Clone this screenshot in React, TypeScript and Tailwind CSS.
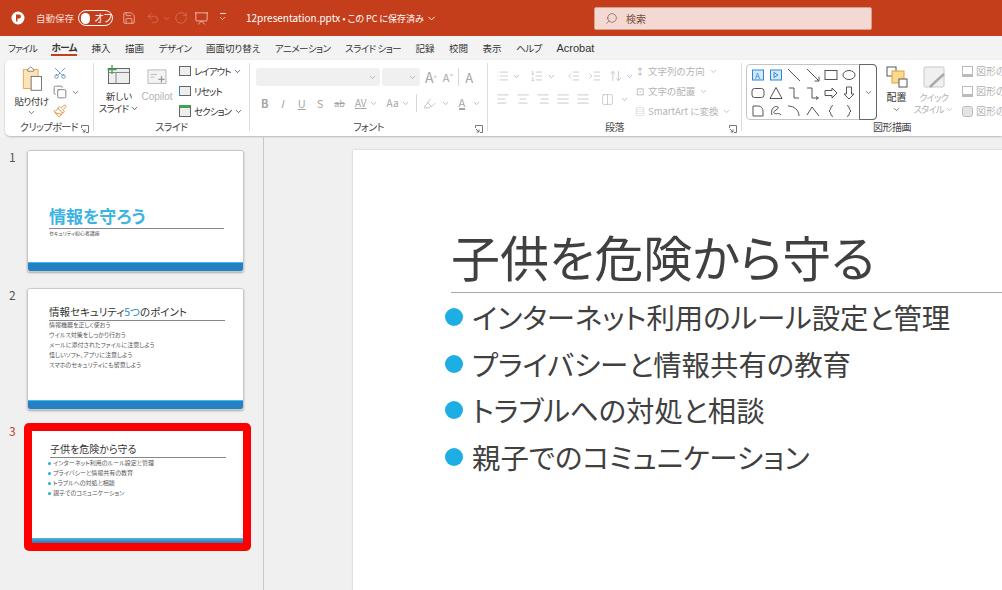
import type { ReactNode } from 'react'
import { ChevronDown, Search, Save, Undo2, RotateCw, Presentation, Scissors, Copy, Paintbrush, List, ListOrdered, IndentDecrease, IndentIncrease, AlignLeft, AlignCenter, AlignRight, AlignJustify, ArrowUpDown, Columns2, Highlighter } from 'lucide-react'

const FONT = '[font-family:"Noto_Sans_CJK_JP","Liberation_Sans",sans-serif] [font-feature-settings:"palt"]'

const items = ['インターネット利用のルール設定と管理', 'プライバシーと情報共有の教育', 'トラブルへの対処と相談', '親子でのコミュニケーション']

function Chev({ className = '' }: { className?: string }) {
  return <ChevronDown size={9} strokeWidth={2} className={`shrink-0 ${className}`} />
}

function Group({ label, width, launcher, children }: { label: string; width: string; launcher?: boolean; children: ReactNode }) {
  return (
    <div className={`${width} relative flex flex-col shrink-0`}>
      <div className="flex-1 flex min-h-0 whitespace-nowrap">{children}</div>
      <div className="h-[14px] mb-[2px] text-center text-[10px] leading-[14px] tracking-[-0.5px] text-[#444]">{label}</div>
      {launcher && (
        <svg viewBox="0 0 8 8" className="absolute right-[4px] bottom-[3px] w-2 h-2 text-[#777]" fill="none" stroke="currentColor">
          <path d="M.5 3V.5H7.500V7.500H5M1 4l3 3M4 4.500V7H1.500" />
        </svg>
      )}
    </div>
  )
}

function Sep() {
  return <div className="w-px shrink-0 bg-[#dcdcdc] mb-[5px]" />
}

function Shape({ d }: { d: ReactNode }) {
  return (
    <svg viewBox="0 0 14 14" className="w-[14px] h-[14px] text-[#555]" fill="none" stroke="currentColor" strokeWidth="1">
      {d}
    </svg>
  )
}

const shapes: ReactNode[] = [
  <g key="a"><rect x="1.500" y="2" width="11" height="10" stroke="#2b88d8" fill="#d6e8f7" /><text x="4" y="10.500" fontSize="8" fill="#2b88d8" stroke="none">A</text></g>,
  <g key="b"><rect x="1.500" y="2" width="11" height="10" stroke="#2b88d8" fill="#d6e8f7" /><path d="M5 4.500 9 7 5 9.500z" stroke="#2b88d8" /></g>,
  <path key="c" d="M1 1 13 13" />,
  <path key="d" d="M1 1 13 13M13 8.500V13H8.500" />,
  <rect key="e" x="1" y="2.500" width="12" height="9" />,
  <ellipse key="f" cx="7" cy="7" rx="6" ry="4.500" />,
  <rect key="g" x="1" y="2.500" width="12" height="9" rx="2.500" />,
  <path key="h" d="M7 1.500 13 12.500H1z" />,
  <path key="i" d="M2 2H7V12H12" />,
  <path key="j" d="M1 2H6V12H11M10 10.500 12.500 12 10 13.500" />,
  <path key="k" d="M1 4.500H8V2L13 7 8 12V9.500H1z" />,
  <path key="l" d="M4.500 1V8H2L7 13 12 8H9.500V1z" />,
  <path key="m" d="M2 2H7C10 2 12 4 12 8V12H2z" />,
  <path key="n" d="M3 11C1 5 6 1 9 3 11 5 3 7 5 9 7 11 10 8 12 11" />,
  <path key="o" d="M1 2C7 2 12 6 12 12" />,
  <path key="p" d="M1 11 6 3 13 12" />,
  <path key="q" d="M9 1.500C6 1.500 7.500 6 5 7 7.500 8 6 12.500 9 12.500" />,
  <path key="r" d="M5 1.500C8 1.500 6.500 6 9 7 6.500 8 8 12.500 5 12.500" />,
]

function Ribbon() {
  return (
    <div className="ml-[5px] h-[76px] bg-white rounded-l-[5px] shadow-[0_1px_2px_#b8b8b8] flex pt-[3px] overflow-hidden">
      <Group label="クリップボード" width="w-[88px]" launcher>
        <div className="w-[48px] pl-[5px] flex flex-col items-center pt-[3px]">
          <svg viewBox="0 0 24 30" className="w-[22px] h-[26px]" fill="none">
            <path d="M2 4H19V26H2z" fill="#fce4b8" stroke="#e2a040" />
            <path d="M7 4 10.500 1 14 4V6H7z" fill="#fff" stroke="#777" />
            <rect x="11" y="12" width="12" height="16" fill="#fff" stroke="#666" />
          </svg>
          <span className="text-[9.500px] tracking-[-0.500px] leading-[12px] mt-[3px] text-[#333]">貼り付け</span>
          <Chev className="mt-[1px] text-[#555]" />
        </div>
        <div className="flex flex-col items-start gap-[5px] pt-[3px]">
          <Scissors size={14} strokeWidth={1.200} className="text-[#3a6ea5] -rotate-90" />
          <div className="flex items-center gap-[4px] text-[#555]"><Copy size={14} strokeWidth={1.200} /><Chev /></div>
          <Paintbrush size={14} strokeWidth={1.500} className="text-[#d88a2a]" />
        </div>
      </Group>
      <Sep />
      <Group label="スライド" width="w-[155px]">
        <div className="w-[46px] flex flex-col items-center pt-[2px] pl-[4px]">
          <svg viewBox="0 0 24 20" className="w-[24px] h-[20px]" fill="none">
            <rect x="1.500" y="3.500" width="21" height="15" fill="#eee" stroke="#666" />
            <path d="M1.500 7.500H22.500M9 7.500V18.500" stroke="#888" />
            <path d="M5 0V9M.5 4.500H9.500" stroke="#3fa34d" strokeWidth="1.300" />
          </svg>
          <span className="text-[9.500px] leading-[12px] mt-[5px] text-[#333]">新しい</span>
          <span className="text-[9.500px] tracking-[-0.800px] leading-[12px] flex items-center text-[#333]">スライド<Chev className="ml-[2px]" /></span>
        </div>
        <div className="w-[34px] flex flex-col items-center pt-[6px]">
          <svg viewBox="0 0 22 20" className="w-[22px] h-[18px]" fill="none">
            <rect x="1" y="1" width="20" height="15" fill="#f3f3f3" stroke="#b5b5b5" />
            <path d="M4 6H11M4 9H8" stroke="#b5b5b5" />
            <path d="M16 8V15M12.500 11.500H19.500" stroke="#999" strokeWidth="1.500" />
          </svg>
          <span className="text-[10px] leading-[12px] mt-[4px] text-[#b4b4b4] [font-family:'Liberation_Sans']">Copilot</span>
        </div>
        <div className="flex flex-col gap-[6px] pt-[1px] pl-[5px] text-[9.500px] tracking-[-1px] leading-[14px] text-[#333]">
          <div className="flex items-center gap-[3px]"><span className="w-3 h-[10px] border border-[#666] bg-[#eee]" />レイアウト<Chev /></div>
          <div className="flex items-center gap-[3px]"><span className="w-3 h-[10px] border border-[#666] border-l-[#2b88d8] bg-[#eee]" />リセット</div>
          <div className="flex items-center gap-[3px]"><span className="w-3 h-[12px] border border-[#666] border-t-[3px] border-t-[#3fa34d] bg-[#eee]" />セクション<Chev /></div>
        </div>
      </Group>
      <Sep />
      <Group label="フォント" width="w-[237px]" launcher>
        <div className="flex flex-col pl-[6px] pt-[5px] gap-[8px] text-[#a6a6a6]">
          <div className="flex items-center">
            <div className="w-[124px] h-[18px] rounded-[3px] bg-[#f0f0f0] flex items-center justify-end pr-[3px]"><Chev /></div>
            <div className="ml-[2px] w-[38px] h-[18px] rounded-[3px] bg-[#f0f0f0] flex items-center justify-end pr-[3px]"><Chev /></div>
            <span className="ml-[5px] text-[14px] leading-none">A<sup className="text-[6px]">^</sup></span>
            <span className="ml-[6px] text-[11px] leading-none">A<sup className="text-[6px]">ˇ</sup></span>
            <span className="ml-[5px] h-[18px] w-px bg-[#d8d8d8]" />
            <span className="ml-[6px] text-[13px] leading-none">A</span>
          </div>
          <div className="flex items-center text-[11px] leading-none">
            <span className="ml-[5px] font-bold">B</span>
            <span className="ml-[12px] italic">I</span>
            <span className="ml-[14px] underline">U</span>
            <span className="ml-[11px]">S</span>
            <span className="ml-[11px] line-through text-[9px]">ab</span>
            <span className="ml-[10px] text-[10px] underline">AV</span><Chev className="ml-[2px]" />
            <span className="ml-[9px] text-[10px]">Aa</span><Chev className="ml-[2px]" />
            <span className="ml-[6px] h-[18px] w-px bg-[#d8d8d8]" />
            <Highlighter size={13} strokeWidth={1.200} className="ml-[6px]" /><Chev className="ml-[5px]" />
            <span className="ml-[9px] border-b-2 border-[#a6a6a6]">A</span><Chev className="ml-[7px]" />
          </div>
        </div>
      </Group>
      <Sep />
      <Group label="段落" width="w-[253px]" launcher>
        <div className="w-[146px] flex flex-col pl-[8px] pt-[6px] gap-[9px] text-[#a6a6a6]">
          <div className="flex items-center gap-[3px]">
            <List size={14} strokeWidth={1} /><Chev className="mr-[6px]" /><ListOrdered size={14} strokeWidth={1} /><Chev className="mr-[8px]" /><IndentDecrease size={14} strokeWidth={1} className="mr-[5px]" /><IndentIncrease size={14} strokeWidth={1} className="mr-[4px]" /><ArrowUpDown size={14} strokeWidth={1} /><Chev />
          </div>
          <div className="flex items-center gap-[6px]">
            <AlignLeft size={14} strokeWidth={1} /><AlignCenter size={14} strokeWidth={1} /><AlignRight size={14} strokeWidth={1} /><AlignJustify size={14} strokeWidth={1} /><AlignJustify size={14} strokeWidth={1} /><Columns2 size={13} strokeWidth={1} className="ml-[5px]" /><Chev />
          </div>
        </div>
        <div className="flex flex-col gap-[6px] pt-[1px] text-[9.500px] leading-[14px] text-[#b4b4b4]">
          <div className="flex items-center gap-[2px]"><span className="w-[12px] text-center">↕</span>文字列の方向<Chev className="ml-[2px]" /></div>
          <div className="flex items-center gap-[2px]"><span className="w-[12px] text-center">⊡</span>文字の配置<Chev className="ml-[2px]" /></div>
          <div className="flex items-center gap-[2px]"><span className="w-[12px] text-center">▤</span>SmartArt に変換<Chev className="ml-[2px]" /></div>
        </div>
      </Group>
      <Sep />
      <Group label="図形描画" width="w-[300px]">
        <div className="ml-[4px] mt-[1px] h-[56px] flex border border-[#c4c4c4] rounded-[4px] shrink-0">
          <div className="grid grid-cols-6 gap-x-[5px] gap-y-[4px] px-[4px] pt-[3px] w-[112px] h-fit">
            {shapes.map((s, i) => <Shape key={i} d={s} />)}
          </div>
          <div className="w-[18px] -my-px -mr-px border border-[#666] rounded-r-[4px] flex items-center justify-center text-[#555]"><Chev /></div>
        </div>
        <div className="w-[39px] shrink-0 flex flex-col items-center pt-[3px]">
          <svg viewBox="0 0 22 22" className="w-[22px] h-[22px]" fill="none">
            <rect x="1" y="1" width="9" height="9" fill="#fff" stroke="#555" />
            <rect x="6" y="5" width="12" height="12" fill="#fbd98f" stroke="#e2a040" />
            <rect x="13" y="13" width="8" height="8" fill="#fff" stroke="#555" />
          </svg>
          <span className="text-[10px] leading-[12px] mt-[3px] text-[#333]">配置</span>
          <Chev className="mt-[2px] text-[#555]" />
        </div>
        <div className="w-[35px] shrink-0 flex flex-col items-center pt-[3px] text-[#b4b4b4]">
          <svg viewBox="0 0 22 22" className="w-[22px] h-[22px]" fill="none">
            <rect x="1" y="1" width="20" height="20" rx="1" fill="#f0f0f0" stroke="#c8c8c8" />
            <path d="M21 8 10 18 7 21" stroke="#aaa" strokeWidth="2.500" />
          </svg>
          <span className="text-[9.500px] tracking-[-1px] leading-[12px] mt-[3px]">クイック</span>
          <span className="text-[9.500px] tracking-[-1px] leading-[12px] flex items-center">スタイル<Chev className="ml-[1px]" /></span>
        </div>
        <div className="flex flex-col gap-[6px] pl-[11px] pt-[1px] text-[10px] leading-[14px] text-[#b4b4b4]">
          <div className="flex items-center gap-[3px]"><span className="w-[11px] h-[11px] border border-[#bbb] border-b-[3px] shrink-0" />図形の塗りつぶし</div>
          <div className="flex items-center gap-[3px]"><span className="w-[11px] h-[11px] border border-[#bbb] border-b-[3px] shrink-0" />図形の枠線</div>
          <div className="flex items-center gap-[3px]"><span className="w-[11px] h-[11px] border border-[#bbb] rounded-[3px] bg-[#e4e4e4] shrink-0" />図形の効果</div>
        </div>
      </Group>
    </div>
  )
}

function Thumb({ n, selected, mt, children }: { n: number; selected?: boolean; mt: string; children: ReactNode }) {
  return (
    <div className={`flex items-start ${mt}`}>
      <span className={`w-[24px] pl-[9px] text-[12px] leading-[14px] shrink-0 ${selected ? 'text-[#c43e1c] mt-[1px]' : 'text-[#555]'}`}>{n}</span>
      <div className={selected ? 'border-[8px] border-[#ff0000] rounded-[5px]' : 'border border-[#c8c8c8] rounded-[3px] ml-[3px] shadow-[0_1px_2px_#aaa]'}>
        <div className={`relative bg-white overflow-hidden flex flex-col ${selected ? 'w-[211px] h-[112px]' : 'w-[215px] h-[120px] rounded-[2px]'}`}>
          {children}
          <div className={`mt-auto shrink-0 ${selected ? 'h-[5px] bg-gradient-to-b from-[#4ab8e0] to-[#3a70b0]' : 'h-[9px] bg-[#2581c4] border-t-[1.500px] border-[#38bdf0]'}`} />
        </div>
      </div>
    </div>
  )
}

export default function App() {
  const kana = 'tracking-[-0.500px]'
  return (
    <div className={`w-[1002px] h-[590px] overflow-hidden flex flex-col bg-[#f0f0f0] ${FONT}`}>
      <div className="h-[36px] shrink-0 bg-[#c43e1c] flex items-center text-white text-[10px] whitespace-nowrap">
        <svg viewBox="0 0 14 14" className="w-[14px] h-[14px] ml-[11px] shrink-0">
          <circle cx="7" cy="7" r="6.500" fill="#fff" />
          <path d="M5 3.500H8A2 2 0 0 1 8 7.500H6.500V10.500H5z" fill="#c43e1c" />
        </svg>
        <span className="ml-[11px] text-[9.500px] text-[#f8dcd3]">自動保存</span>
        <div className="ml-[4px] w-[35px] h-[16px] rounded-full border border-white flex items-center">
          <span className="ml-[2px] w-[11px] h-[11px] rounded-full bg-white" />
          <span className="ml-[4px] leading-none">オフ</span>
        </div>
        <Save size={14} strokeWidth={1.200} className="ml-[9px] text-[#f4d3c9]" />
        <Undo2 size={14} strokeWidth={1.200} className="ml-[10px] text-[#d97b62]" />
        <Chev className="ml-[2px] text-[#d97b62]" />
        <RotateCw size={14} strokeWidth={1.200} className="ml-[3px] text-[#d97b62]" />
        <Presentation size={15} strokeWidth={1.200} className="ml-[6px] text-[#f8dcd3]" />
        <div className="ml-[9px] flex flex-col items-center text-[#f8dcd3]">
          <span className="w-[6px] h-px bg-[#f8dcd3]" />
          <Chev />
        </div>
        <span className="ml-[19px] text-[10px]">12presentation.pptx <span className="text-[9px]">• この PC に保存済み</span></span>
        <ChevronDown size={11} className="ml-[2px]" />
        <div className="ml-auto mr-[130px] w-[278px] h-[23px] rounded-[2px] bg-[#f3d9d2] border border-[#d99f8e] flex items-center text-[#7a4a3c]">
          <Search size={13} strokeWidth={1.200} className="ml-[10px] -scale-x-100" />
          <span className="ml-[8px]">検索</span>
        </div>
      </div>
      <div className="h-[24px] shrink-0 bg-[#f3f3f3] flex items-center pl-[8px] gap-[14.500px] text-[9.500px] text-[#333] whitespace-nowrap">
        <span className="tracking-[-1px]">ファイル</span>
        <span className={`font-bold border-b-2 border-[#c43e1c] leading-[14px] ${kana}`}>ホーム</span>
        <span>挿入</span><span>描画</span><span className={kana}>デザイン</span><span>画面切り替え</span><span className={kana}>アニメーション</span><span className={kana}>スライド ショー</span><span>記録</span><span>校閲</span><span>表示</span><span className={kana}>ヘルプ</span>
        <span className="[font-family:'Liberation_Sans'] text-[11px]">Acrobat</span>
      </div>
      <div className="bg-[#f3f3f3] pb-[1px] shrink-0">
        <Ribbon />
      </div>
      <div className="flex-1 min-h-0 flex">
        <div className="w-[264px] shrink-0 border-r border-[#c8c8c8] pt-[13px]">
          <Thumb n={1} mt="">
            <div className="absolute left-[21px] top-[54px] text-[17px] leading-[22px] font-bold text-[#3db3e3]">情報を守ろう</div>
            <div className="absolute left-[21px] right-[19px] top-[77px] border-t border-[#888]" />
            <div className="absolute left-[21px] top-[78px] text-[5px] leading-[8px] text-[#444]">セキュリティ初心者講座</div>
          </Thumb>
          <Thumb n={2} mt="mt-[16px]">
            <div className="absolute left-[21px] top-[14px] text-[10.500px] leading-[18px] text-[#333] whitespace-nowrap">情報セキュリティ<span className="text-[#2b88c8]">5つ</span>のポイント</div>
            <div className="absolute left-[21px] right-[18px] top-[31px] border-t border-[#888]" />
            <div className="absolute left-[21px] top-[31px] text-[6px] leading-[10px] text-[#555] whitespace-nowrap">
              <div>情報機器を正しく使おう</div>
              <div>ウイルス対策をしっかり行おう</div>
              <div>メールに添付されたファイルに注意しよう</div>
              <div>怪しいソフト、アプリに注意しよう</div>
              <div>スマホのセキュリティにも留意しよう</div>
            </div>
          </Thumb>
          <Thumb n={3} selected mt="mt-[13px]">
            <div className="absolute left-[18px] top-[9px] text-[10px] leading-[18px] text-[#333] whitespace-nowrap">子供を危険から守る</div>
            <div className="absolute left-[18px] right-[17px] top-[26px] border-t border-[#888]" />
            <div className="absolute left-[16px] top-[27px] text-[6px] leading-[10px] text-[#555] whitespace-nowrap">
              {items.map(t => (
                <div key={t} className="flex items-center gap-[2px]"><span className="w-[3px] h-[3px] rounded-full bg-[#1daee4]" />{t}</div>
              ))}
            </div>
          </Thumb>
        </div>
        <div className="flex-1 pl-[89px] pt-[13px]">
          <div className="w-[800px] h-[450px] bg-white pl-[98px] pt-[78px] shadow-[0_0_2px_#c0c0c0]">
            <div className="text-[49px] leading-[56px] text-[#404040] border-b border-[#aaa] whitespace-nowrap h-[65px]">子供を危険から守る</div>
            <div className="mt-px -ml-[6px] text-[28.400px] leading-[46.500px] text-[#404040] whitespace-nowrap">
              {items.map(t => (
                <div key={t} className="flex items-center">
                  <span className="w-[18px] h-[18px] rounded-full bg-[#1daee4] mr-[9px]" />
                  {t}
                </div>
              ))}
            </div>
          </div>
        </div>
      </div>
    </div>
  )
}
